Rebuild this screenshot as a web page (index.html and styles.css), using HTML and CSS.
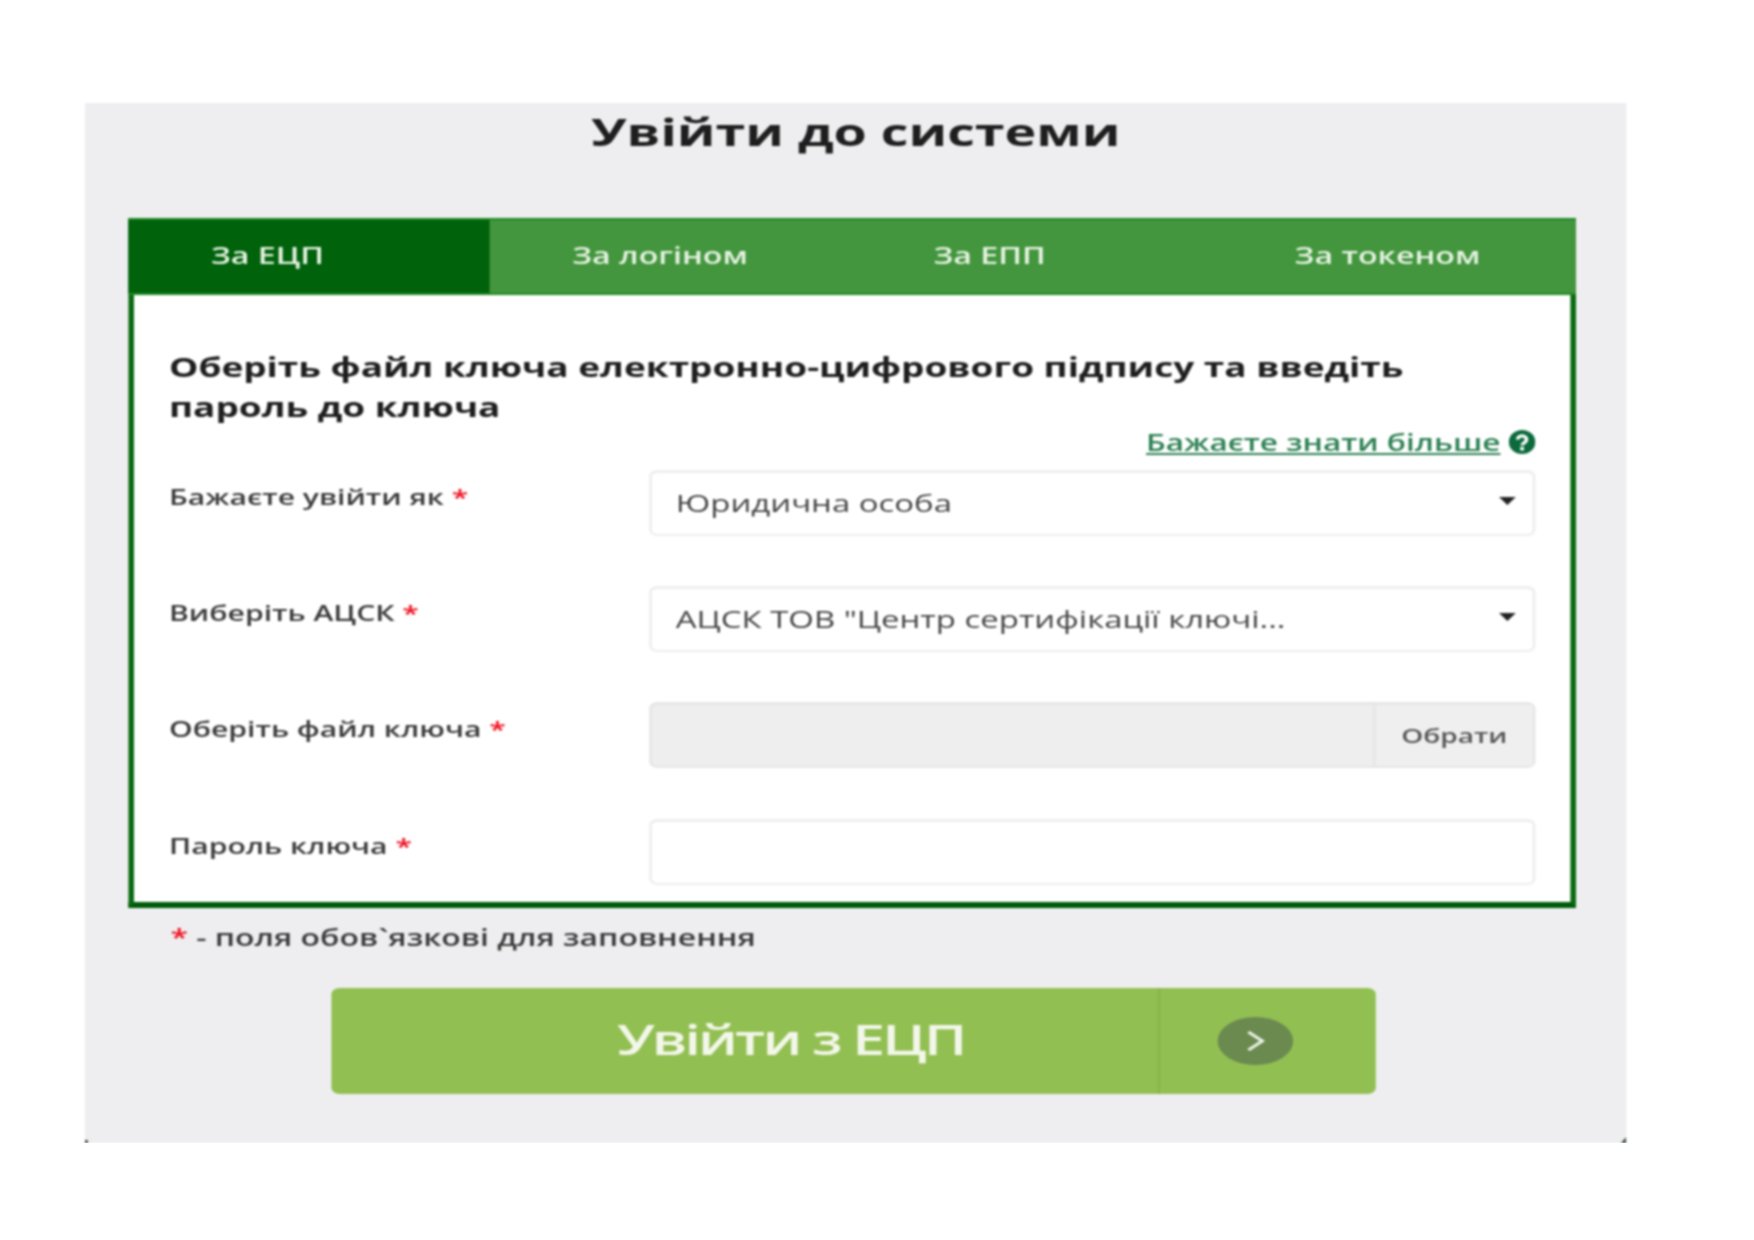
FILE: index.html
```html
<!DOCTYPE html>
<html lang="uk">
<head>
    <meta charset="UTF-8">
    <meta name="viewport" content="width=device-width, initial-scale=1.0">
    <title>Увійти до системи</title>
    <link rel="stylesheet" href="styles.css">
</head>
<body>
    <div class="panel">
        <h1 class="title">Увійти до системи</h1>

        <div class="card">
            <div class="tabs">
                <a class="tab active" href="#">За ЕЦП</a>
                <a class="tab" href="#">За логіном</a>
                <a class="tab" href="#">За ЕПП</a>
                <a class="tab" href="#">За токеном</a>
            </div>
            <form class="form">
                <h2 class="heading">Оберіть файл ключа електронно-цифрового підпису та введіть пароль до ключа</h2>
                <div class="more">
                    <a href="#">Бажаєте знати більше </a>
                    <svg class="help" viewBox="0 0 24 24" preserveAspectRatio="none">
                        <circle cx="12" cy="12" r="12" fill="#0c6a3c"/>
                        <path d="M8 9.5a4 3.6 0 1 1 6.2 3c-1.500 1-2.200 1.500-2.200 3" fill="none" stroke="#fff" stroke-width="3.200"/>
                        <rect x="10.300" y="17" width="3.400" height="3.400" fill="#fff"/>
                    </svg>
                </div>

                <div class="row">
                    <label>Бажаєте увійти як <span class="req">*</span></label>
                    <div class="select">Юридична особа<span class="caret"></span></div>
                </div>
                <div class="row">
                    <label>Виберіть АЦСК <span class="req">*</span></label>
                    <div class="select">АЦСК ТОВ "Центр сертифікації ключі...<span class="caret"></span></div>
                </div>
                <div class="row">
                    <label>Оберіть файл ключа <span class="req">*</span></label>
                    <div class="file">
                        <div class="file-name"></div>
                        <button class="file-btn" type="button">Обрати</button>
                    </div>
                </div>
                <div class="row last">
                    <label for="pass">Пароль ключа <span class="req">*</span></label>
                    <input class="field" type="password" id="pass">
                </div>
            </form>
        </div>

        <p class="note"><span class="req">*</span> - поля обов`язкові для заповнення</p>

        <button class="submit" type="button">
            <span class="submit-text">Увійти з ЕЦП</span>
            <span class="submit-go">
                <span class="circle">
                    <svg viewBox="0 0 24 24" width="24" height="24">
                        <path d="M7 3l10 9-10 9" fill="none" stroke="#eef3e6" stroke-width="2.600"/>
                    </svg>
                </span>
            </span>
        </button>
    </div>
</body>
</html>
```

FILE: styles.css
```css
*{
    margin: 0;
    padding: 0;
    box-sizing: border-box;
}

body{
    background-color: #fff;
    font-family: "Open Sans", "Liberation Sans", sans-serif;
    overflow: hidden;
}

/* the whole panel is stretched sideways, like the picture */
.panel{
    position: relative;
    width: 1101px;
    height: 1040px;
    margin: 103px 0 0 85px;
    padding: 0 31px;
    background-color: #eeeef0;
    transform: scaleX(1.4);
    transform-origin: left top;
    filter: blur(0.8px);
}

.panel::before,
.panel::after{
    content: "";
    position: absolute;
    bottom: 0;
    background-color: #3d4a45;
}

.panel::before{
    left: 0;
    width: 2px;
    height: 3px;
}

.panel::after{
    right: 0;
    width: 4px;
    height: 6px;
    clip-path: polygon(100% 0, 100% 100%, 0 100%);
}

.title{
    height: 58px;
    font-size: 38.4px;
    line-height: 56px;
    font-weight: 700;
    text-align: center;
    color: #1e1e1e;
}

.card{
    width: 1034px;
    margin-top: 57px;
    background-color: #fff;
    border: 4px solid #0a6a12;
    border-top: 0;
    border-bottom-width: 6px;
    border-bottom-color: #005c0a;
}

.tabs{
    display: flex;
    height: 77px;
    margin: 0 -4px;
    background-color: #43963e;
    border-top: 2px solid #1f8a24;
    border-bottom: 2px solid #1f8a24;
}

.tab{
    width: 258px;
    padding-left: 59px;
    font-size: 23px;
    line-height: 71px;
    font-weight: 600;
    color: #e8f3e4;
    text-decoration: none;
}

.tab.active{
    background-color: #00620b;
}

.form{
    padding: 52px 25px 17px 25px;
}

.heading{
    font-size: 26.4px;
    line-height: 40px;
    font-weight: 700;
    color: #1e1e1e;
}

.more{
    display: flex;
    justify-content: flex-end;
    align-items: center;
    gap: 6px;
    height: 30px;
    margin-bottom: 13px;
    font-size: 22.5px;
    font-weight: 600;
}

.more a{
    color: #2c8053;
}

.help{
    width: 19px;
    height: 24px;
}

.row{
    display: flex;
    justify-content: space-between;
    margin-bottom: 50px;
}

.row.last{
    margin-top: 51px;
    margin-bottom: 0;
}

.row label{
    font-size: 21.5px;
    line-height: 54px;
    font-weight: 600;
    color: #3a3a3a;
}

.req{
    color: #f01020;
}

.select,
.field,
.file{
    width: 633px;
    height: 66px;
    border: 2px solid #eeeeee;
    border-top-width: 3px;
    border-radius: 6px;
    background-color: #fff;
}

.select{
    position: relative;
    padding-left: 17px;
    font-size: 23.5px;
    line-height: 60px;
    color: #444;
}

.caret{
    position: absolute;
    top: 24px;
    right: 12px;
    border-top: 8px solid #222;
    border-left: 6px solid transparent;
    border-right: 6px solid transparent;
}

.file{
    display: flex;
    background-color: #eeeeee;
    border-color: #e6e6e6;
}

.file-name{
    flex: 1;
}

.file-btn{
    width: 114px;
    background-color: #efefef;
    border: 0;
    border-left: 2px solid #e6e6e6;
    font-family: inherit;
    font-size: 20px;
    font-weight: 600;
    color: #555;
}

.note{
    margin-top: 15px;
    padding-left: 30px;
    font-size: 22.8px;
    line-height: 30px;
    font-weight: 600;
    color: #3a3a3a;
}

.submit{
    display: flex;
    width: 746px;
    height: 106px;
    margin: 35px 0 0 145px;
    background-color: #92bf52;
    border: 0;
    border-radius: 6px;
    font-family: inherit;
    color: #f3f7ea;
}

.submit-text{
    flex: 1;
    padding-left: 204px;
    font-size: 42px;
    line-height: 102px;
    font-weight: 600;
    letter-spacing: -2px;
    text-align: left;
}

.submit-go{
    display: flex;
    align-items: center;
    width: 156px;
    padding-left: 41px;
    border-left: 2px solid #8ab54d;
}

.circle{
    display: flex;
    align-items: center;
    justify-content: center;
    width: 54px;
    height: 48px;
    border-radius: 50%;
    background-color: #6a8a50;
}
```
